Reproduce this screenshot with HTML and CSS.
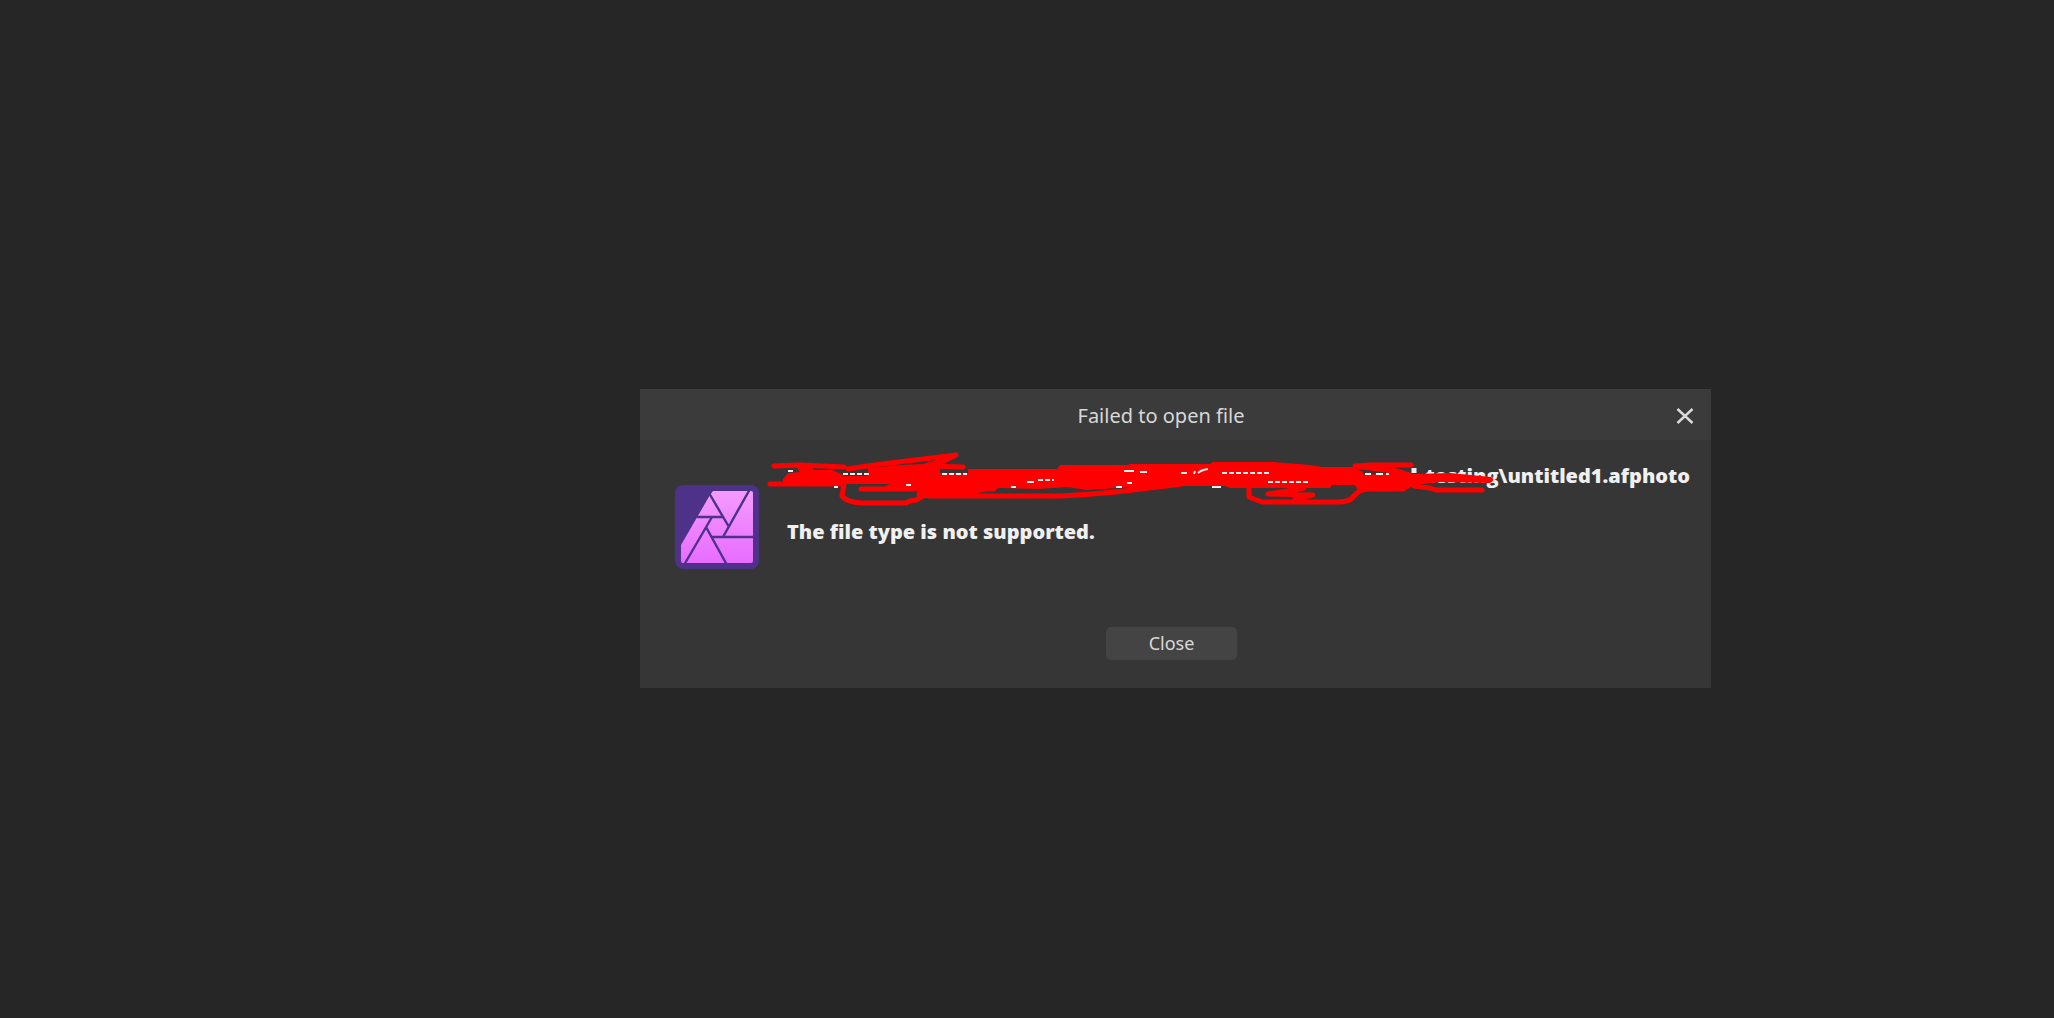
FILE: index.html
```html
<!DOCTYPE html>
<html lang="en">
<head>
  <meta charset="UTF-8" />
  <meta name="viewport" content="width=device-width, initial-scale=1" />
  <title>Failed to open file</title>
  <link rel="stylesheet" href="styles.css">
</head>
<body>

  <div class="dialog" role="alertdialog" aria-labelledby="dialogTitle" aria-describedby="dialogReason">
    <header class="dialog-header">
      <h1 id="dialogTitle">Failed to open file</h1>
      <button type="button" class="dismiss" aria-label="Dismiss">
        <svg width="18" height="16" viewBox="0 0 18 16">
          <path d="M1.5 1 L16.5 15 M16.5 1 L1.5 15" fill="none" stroke="#dcdcdc" stroke-width="2.4" />
        </svg>
      </button>
    </header>

    <div class="dialog-body">
      <svg class="app-icon" viewBox="0 0 84 84" aria-hidden="true">
        <defs>
          <linearGradient id="pink" x1="0" y1="0" x2="0" y2="1">
            <stop offset="0" stop-color="#f59bff" />
            <stop offset="1" stop-color="#e76cff" />
          </linearGradient>
        </defs>
        <rect width="84" height="84" rx="8" fill="#4e3188" />
        <path d="M38 6 H76 Q78 6 78 8 V76 Q78 78 76 78 H8 Q6 78 6 76 V60 L35 10 Z" fill="url(#pink)" />
        <path d="M34 8 L54 42 M75 4 L48 52 M22 32 H48 M37 32 L9 80 M31 42 L52 80 M37 52 H80" fill="none" stroke="#4e3188" stroke-width="2.4" />
      </svg>

      <div class="message">
        <p class="path">testing\untitled1.afphoto</p>
        <p id="dialogReason">The file type is not supported.</p>

        <!-- marker strokes over the private part of the path -->
        <svg class="redaction" viewBox="765 450 735 60" aria-hidden="true">
          <g fill="#f00">
            <path d="M797 468 L813 468 L813 470 L832 470 L841 474 L845 477 L845 485 L783 484 L783 479 L788 473 L800 472 Z" />
            <path d="M868 476 L868 468 L900 465 L925 464 L940 465 L940 473 L968 473 L968 469 L1057 469 L1060 465 L1128 465 L1130 464 L1210 464 L1213 462 L1273 462 L1310 465 L1322 467 L1353 467 L1363 472 L1365 485 L1332 485 L1330 488 L1230 488 L1225 486 L1180 486 L1140 491 L1130 487 L1103 489 L1086 490 L1068 487 L1038 489 L1000 488 L975 494 L918 497 L920 489 L882 488 L890 484 L843 484 L843 476 Z" />
            <path d="M1363 475 L1392 473 L1392 467 L1402 470 L1414 474 L1450 473 L1491 477 Q1496 480 1490 483 L1440 482 L1415 485 L1404 491 L1358 490 L1354 484 Z" />
          </g>
          <g fill="none" stroke="#f00" stroke-width="5" stroke-linecap="round" stroke-linejoin="round">
            <path d="M774 466 L800 465 L844 467" />
            <path d="M770 484 H844 L842 496 Q846 502 862 503 H906 L910 501 L916 500 L925 495" />
            <path d="M848 469 L867 466 L890 463 L956 455 L946 460 L925 466 L963 467" />
            <path d="M861 489 H994" />
            <path d="M919 494 L930 496 H1060 Q1100 494 1133 490 L1182 484" />
            <path d="M1249 487 V497 L1262 502 H1338 Q1350 502 1354 496 Q1360 489 1368 489 H1403" />
            <path d="M1268 494 L1293 490 L1304 488 M1268 494 L1313 495 L1295 499 L1296 488" />
            <path d="M1355 466 L1370 465 H1411 M1355 466 L1393 471" />
            <path d="M1418 481 L1414 486 L1430 488 L1436 490 H1482" />
          </g>
          <!-- bits of lettering left showing between the strokes -->
          <g fill="none" stroke="#eee" stroke-width="2">
            <path d="M788 471 H793 M843 474 H869" stroke-dasharray="5 2" />
            <path d="M834 487 H838 M906 485 H911 M1011 487 H1016 M1116 487 H1122 M1212 487 H1221" />
            <path d="M942 474 H967 M1038 480 H1054 M1222 473 H1269 M1268 482 H1309" stroke-dasharray="5 2" />
            <path d="M1027 482 H1034 M1124 471 H1134 M1140 472 H1147 M1127 483 H1132 M1181 473 L1187 473 M1194 474 L1195 471 M1198 473 Q1201 470 1208 469" />
            <path d="M1365 474 H1371 M1376 474 H1389" stroke-dasharray="7 3" />
            <path d="M1414 468 V473" stroke-width="5" />
          </g>
        </svg>
      </div>
    </div>

    <footer class="dialog-footer">
      <button type="button" class="close-button">Close</button>
    </footer>
  </div>

</body>
</html>
```
FILE: styles.css
```css
* {
  box-sizing: border-box;
}

body {
  margin: 0;
  min-height: 100vh;
  padding: 59px 0 0 297px;
  display: flex;
  align-items: center;
  justify-content: center;
  background-color: #262626;
  border-bottom: 1px solid #2c2329;
  font-family: 'Noto Sans', 'Open Sans', sans-serif;
  color: #d8d8d8;
}

.dialog {
  width: 100%;
  max-width: 1071px;
  background-color: #363636;
}

.dialog-header {
  display: flex;
  align-items: center;
  height: 51px;
  padding: 4px 0 0 23px;
  background-color: #3b3b3b;
}

h1 {
  flex: 1;
  margin: 0;
  font-size: 20px;
  font-weight: normal;
  line-height: 28px;
  text-align: center;
}

.dismiss {
  display: flex;
  align-items: center;
  justify-content: center;
  width: 52px;
  height: 28px;
  padding: 0;
  border: none;
  background: none;
  cursor: pointer;
}

.dialog-body {
  display: flex;
  align-items: flex-start;
  gap: 28px;
  padding: 22px 21px 0 35px;
}

.app-icon {
  flex: none;
  width: 84px;
  height: 84px;
  margin-top: 23px;
}

.message {
  position: relative;
  flex: 1;
  color: #f0f0f0;
  font-family: 'Open Sans', 'Noto Sans', sans-serif;
  font-size: 20px;
  font-weight: 800;
  line-height: 28px;
}

.message p {
  margin: 0 0 28px;
}

.message .path {
  text-align: right;
}

.redaction {
  position: absolute;
  top: -12px;
  left: -22px;
  width: 735px;
  height: 60px;
}

.dialog-footer {
  display: flex;
  justify-content: center;
  padding: 53px 8px 28px 0;
}

.close-button {
  width: 131px;
  height: 33px;
  padding: 0;
  border: none;
  border-radius: 5px;
  background-color: #444;
  color: #d8d8d8;
  font-family: inherit;
  font-size: 18px;
  line-height: 28px;
  cursor: pointer;
}

.close-button:hover,
.dismiss:hover {
  background-color: #4c4c4c;
}
```
